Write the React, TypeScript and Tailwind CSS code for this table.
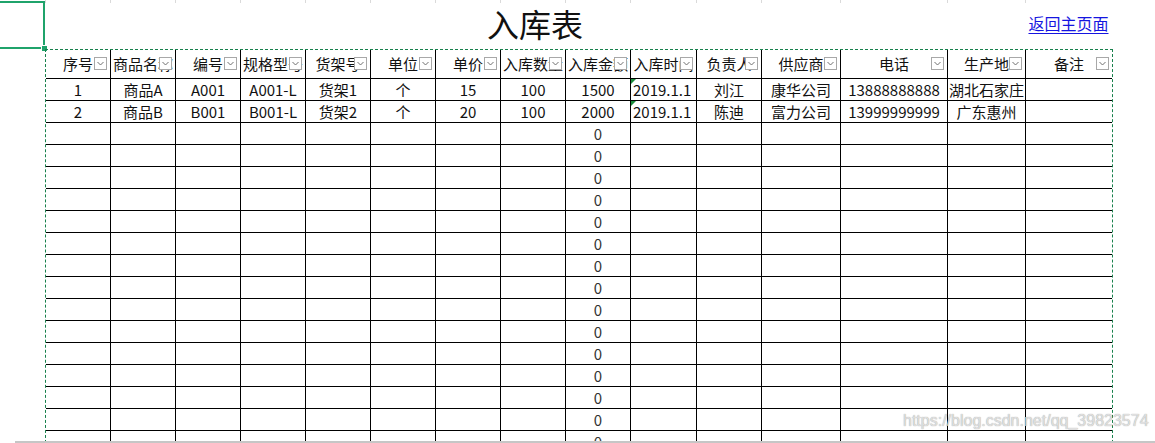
import React from "react";

const headers = [
  "序号",
  "商品名称",
  "编号",
  "规格型号",
  "货架号",
  "单位",
  "单价",
  "入库数量",
  "入库金额",
  "入库时间",
  "负责人",
  "供应商",
  "电话",
  "生产地",
  "备注",
];

const filled: string[][] = [
  ["1", "商品A", "A001", "A001-L", "货架1", "个", "15", "100", "1500", "2019.1.1", "刘江", "康华公司", "13888888888", "湖北石家庄", ""],
  ["2", "商品B", "B001", "B001-L", "货架2", "个", "20", "100", "2000", "2019.1.1", "陈迪", "富力公司", "13999999999", "广东惠州", ""],
];

const emptyRows: string[][] = Array.from({ length: 15 }, () =>
  headers.map((_, i) => (i === 8 ? "0" : ""))
);

const rows = [...filled, ...emptyRows];

const FilterButton: React.FC = () => (
  <span className="absolute right-[3px] top-[7px] flex h-[13px] w-[13px] items-center justify-center border border-[#a8a8a8] bg-white">
    <svg width="7" height="5" viewBox="0 0 7 5" fill="none">
      <polyline points="0.5,1 3.5,4 6.5,1" stroke="#707070" strokeWidth="1" />
    </svg>
  </span>
);

const App: React.FC = () => {
  return (
    <div
      className="flex h-[443px] w-[1155px] flex-col overflow-hidden bg-white text-[#111]"
      style={{ fontFamily: '"Noto Sans CJK SC", "Noto Sans", sans-serif' }}
    >
      {/* top area: selected cell, title, link */}
      <div className="flex h-[49px] shrink-0">
        <div className="relative mt-[1px] h-[48px] w-[45px] border-t-2 border-r-2 border-b-2 border-[#1fa36b]">
          <span className="absolute -right-[5px] -bottom-[5px] h-[7px] w-[7px] border border-white bg-[#1fa36b]" />
        </div>
        <div className="flex w-[1067px] flex-col">
          <div className="grid h-[3px] grid-cols-[65px_65px_65px_65px_65px_65px_65px_65px_65px_66px_65px_79px_107px_78px_87px]">
            {headers.map((h) => (
              <div key={h} className="border-l border-[#dadada]" />
            ))}
          </div>
          <div className="flex h-[46px]">
            <div className="flex w-[980px] items-center justify-center pb-[6px] text-[32px] leading-none">
              入库表
            </div>
            <div className="flex w-[87px] items-center justify-center pb-[6px]">
              <a href="#" className="text-[16px] leading-none text-[#1515e0] underline underline-offset-[3px]">
                返回主页面
              </a>
            </div>
          </div>
        </div>
      </div>

      {/* table */}
      <div className="relative flex-1 overflow-hidden">
        <div className="ml-[45px] w-[1068px] border-x border-t border-dashed border-[#17804c]">
          <div className="grid grid-cols-[65px_65px_65px_65px_65px_65px_65px_65px_65px_66px_65px_79px_107px_78px_86px]">
            {headers.map((h, i) => (
              <div
                key={h}
                className={`relative flex h-[29px] items-center justify-center overflow-hidden whitespace-nowrap border-b border-black text-[15px] ${
                  i < headers.length - 1 ? "border-r" : ""
                }`}
              >
                <span>{h}</span>
                <FilterButton />
              </div>
            ))}
            {rows.map((row, r) =>
              row.map((cell, c) => (
                <div
                  key={`${r}-${c}`}
                  className={`relative flex h-[22px] items-center overflow-hidden whitespace-nowrap border-b border-black text-[15px] leading-none ${
                    c < headers.length - 1 ? "border-r" : ""
                  } ${c === 9 ? "justify-start pl-[2px]" : "justify-center"} ${
                    cell === "0" ? "text-[#333]" : ""
                  }`}
                >
                  {c === 9 && cell && (
                    <span className="absolute left-0 top-0 h-0 w-0 border-t-[5px] border-r-[5px] border-t-[#1c8c3c] border-r-transparent" />
                  )}
                  {cell}
                </div>
              ))
            )}
          </div>
        </div>
        <div
          className="absolute left-[903px] top-[363px] text-[16px] leading-[18px] text-[rgba(235,235,235,0.85)] [text-shadow:0_0_1px_rgba(0,0,0,0.45)]"
          style={{ fontFamily: '"Liberation Sans", Arial, sans-serif' }}
        >
          https://blog.csdn.net/qq_39823574
        </div>
      </div>

      <div className="ml-[15px] h-[2px] shrink-0 bg-[#c6c6c6]" />
    </div>
  );
};

export default App;
